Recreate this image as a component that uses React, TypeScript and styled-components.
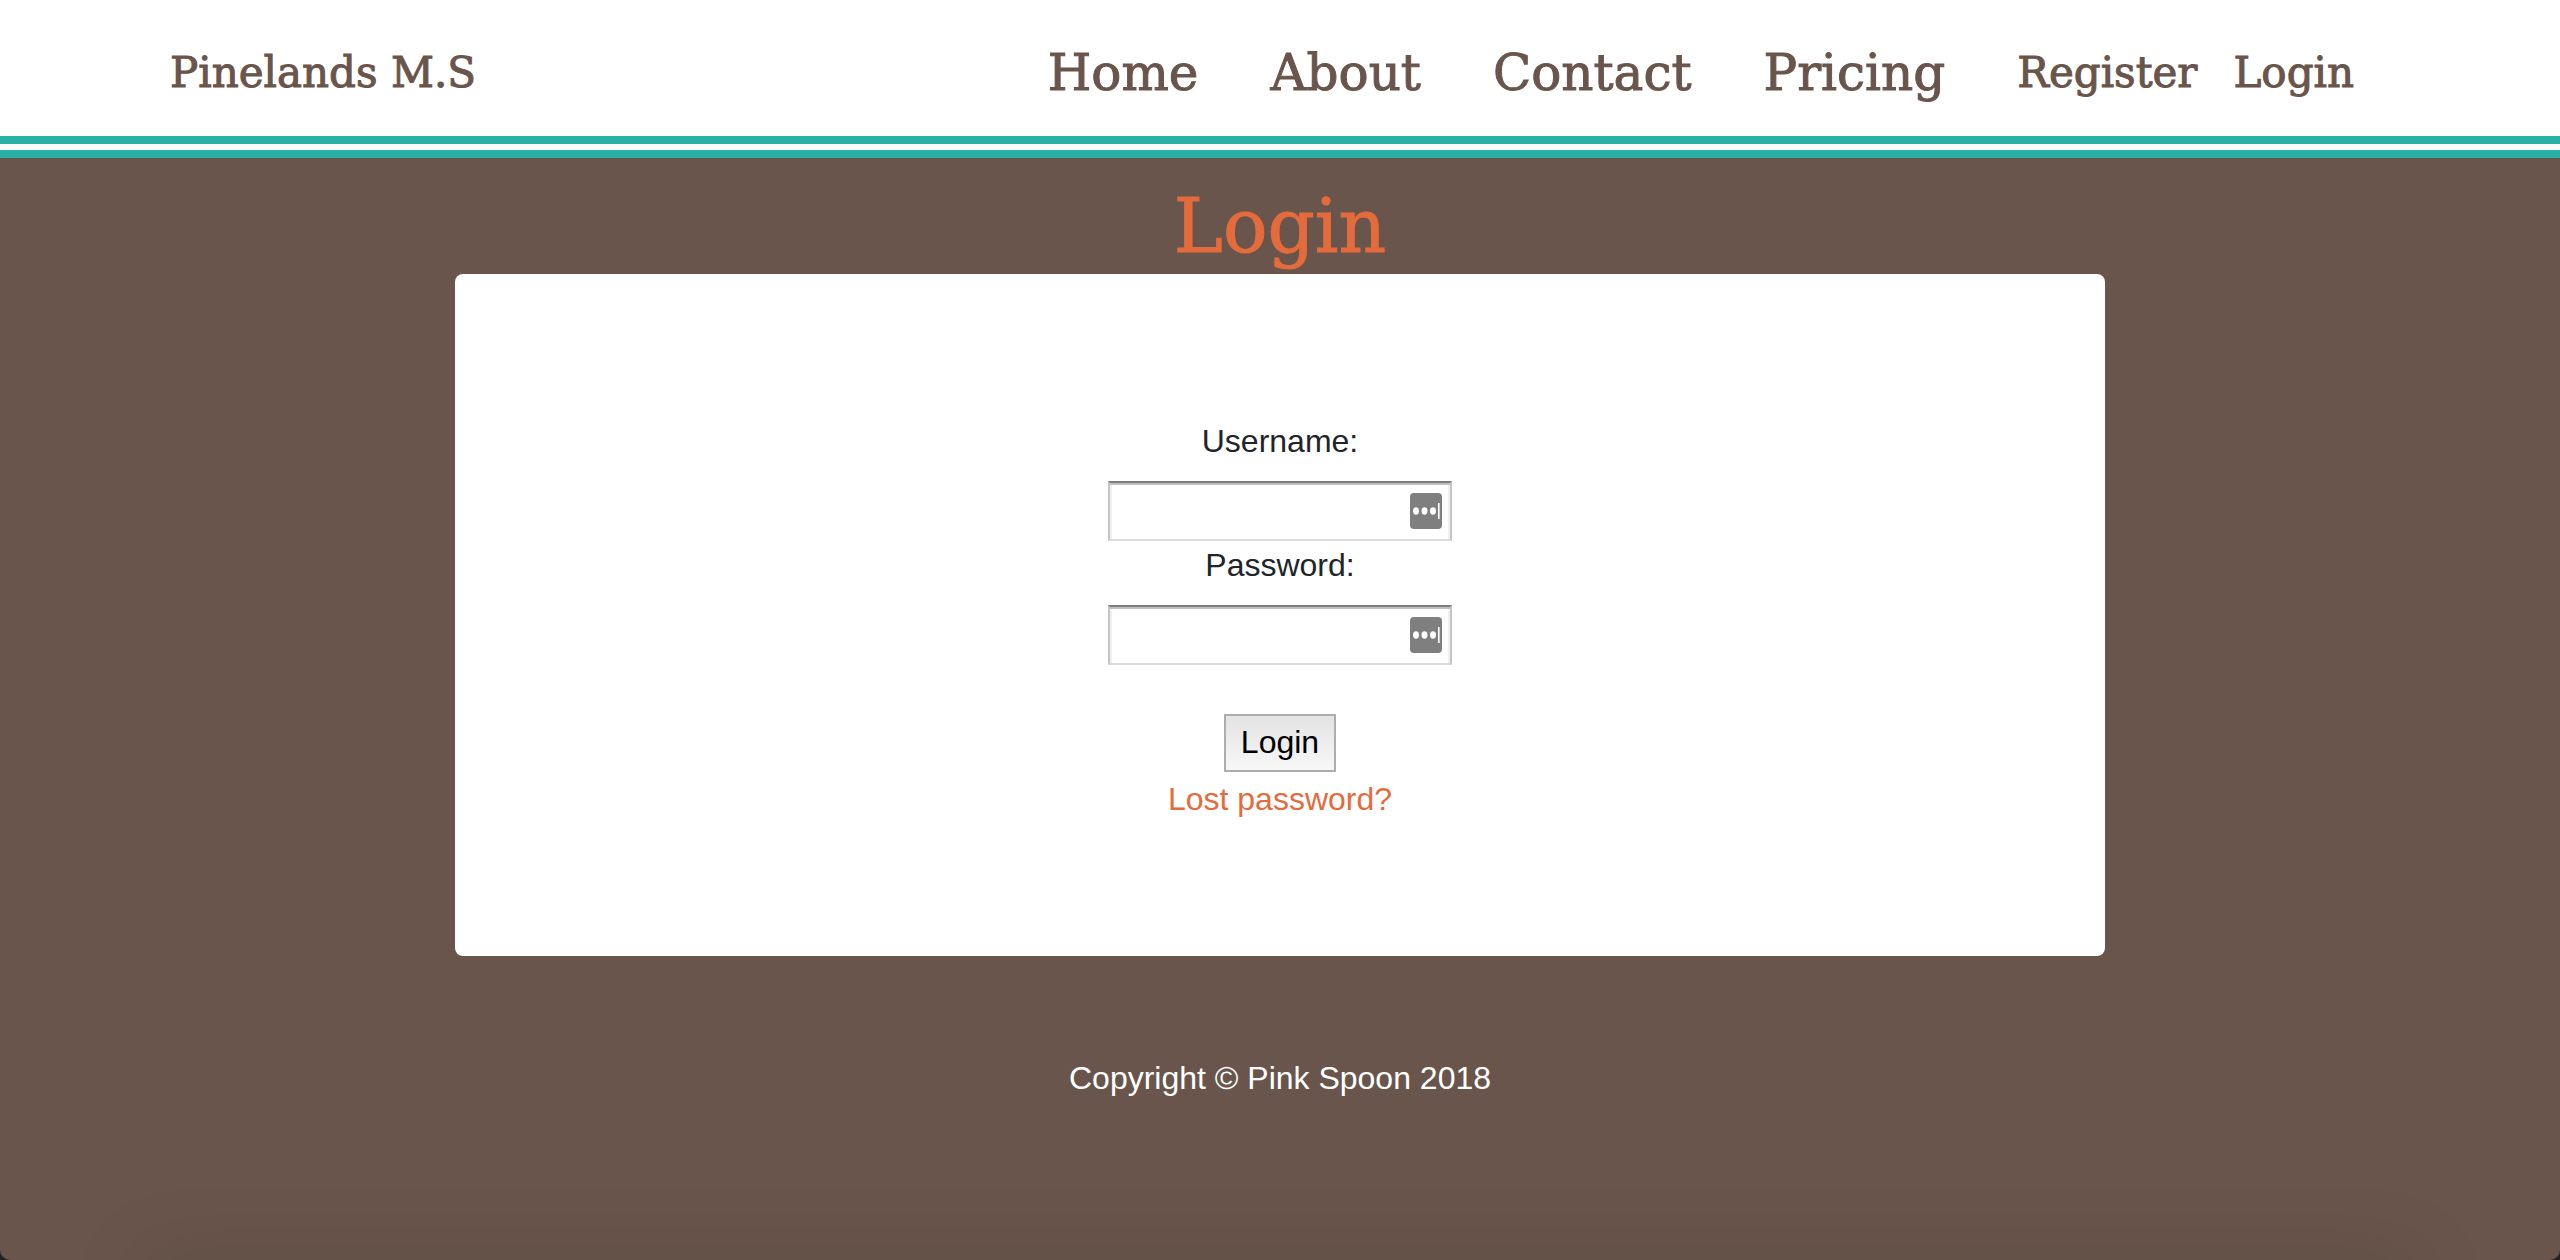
import React from "react";
import styled, { createGlobalStyle } from "styled-components";

const brown = "#69554b";
const teal = "#29b1a5";
const orange = "#e46b3c";
const slab = `"DejaVu Serif", serif`;
const sans = `"Liberation Sans", Arial, sans-serif`;

const GlobalStyle = createGlobalStyle`
  *, *::before, *::after { box-sizing: border-box; }
  html { background: #222; }
  body {
    margin: 0;
    font-family: ${sans};
    font-size: 32px;
    line-height: 48px;
    color: #212529;
  }
`;

const Page = styled.div`
  position: relative;
  min-height: 100vh;
  overflow: hidden;
  background: ${brown};
  border-radius: 0 0 10px 10px;

  &::after {
    content: "";
    position: absolute;
    left: 140px;
    right: 140px;
    bottom: -40px;
    height: 40px;
    box-shadow: 0 0 80px rgba(0, 0, 0, 0.14);
  }
`;

const Header = styled.header`
  background: #fff;
`;

const Stripes = styled.div`
  height: 22px;
  border: solid ${teal};
  border-width: 8px 0;
`;

const Bar = styled.div`
  max-width: 2220px;
  min-height: 136px;
  margin: 0 auto;
  padding: 10px 36px 0 0;
  display: flex;
  align-items: center;
  justify-content: space-between;
`;

const NavLink = styled.a<{ $large?: boolean }>`
  font-family: ${slab};
  font-size: ${(p) => (p.$large ? 50 : 42)}px;
  line-height: 64px;
  color: ${brown};
  -webkit-text-stroke: 1px ${brown};
  text-decoration: none;
  white-space: nowrap;
`;

const Nav = styled.nav`
  display: flex;
  align-items: center;
  gap: 72px;
`;

const Account = styled.div`
  display: flex;
  gap: 36px;
`;

const Main = styled.main`
  display: flex;
  flex-direction: column;
  align-items: center;
`;

const Title = styled.h1`
  margin: 0;
  padding-top: 20px;
  font-family: ${slab};
  font-weight: 400;
  font-size: 74px;
  line-height: 96px;
  color: ${orange};
  -webkit-text-stroke: 1px ${orange};
`;

const Card = styled.section`
  width: 100%;
  max-width: 1650px;
  padding: 143px 32px 133px;
  background: #fff;
  border-radius: 8px;
`;

const Form = styled.form`
  display: flex;
  flex-direction: column;
  align-items: center;
`;

const Label = styled.label`
  margin-bottom: 16px;
`;

const Field = styled.div`
  position: relative;
  width: 344px;
`;

const Input = styled.input`
  display: block;
  width: 100%;
  height: 60px;
  padding: 2px 48px 2px 8px;
  border: 2px solid #c4c4c4;
  border-top-color: #7c7c7c;
  border-bottom-color: #dadada;
  border-radius: 0;
  outline: none;
  background: #fff;
  box-shadow: inset 0 2px #c0c0c0, inset 2px 0 #f0f0f0, inset -2px 0 #f0f0f0;
  font: inherit;
`;

const FillBadge = styled.svg`
  position: absolute;
  top: 12px;
  right: 10px;
  width: 32px;
  height: 36px;
`;

const Submit = styled.button`
  height: 58px;
  margin: 49px 0 3px;
  padding: 0 15px 3px;
  border: 2px solid #adadad;
  border-radius: 0;
  background: linear-gradient(#e3e3e3, #f7f7f7);
  font: inherit;
  line-height: 48px;
  color: #000;
`;

const Lost = styled.a`
  color: ${orange};
  text-decoration: none;
`;

const Footer = styled.footer`
  padding: 98px 0 32px;
  text-align: center;
  color: #fff;
`;

function PasswordManagerBadge() {
  return (
    <FillBadge viewBox="0 0 32 36" aria-hidden="true">
      <rect width="32" height="36" rx="4" fill="#7f7f7f" />
      <g fill="#fff">
        <ellipse cx="6" cy="18" rx="3" ry="3.7" />
        <ellipse cx="14.5" cy="18" rx="3" ry="3.7" />
        <ellipse cx="23" cy="18" rx="3" ry="3.7" />
        <rect x="28" y="10" width="1.6" height="16" />
      </g>
    </FillBadge>
  );
}

export default function App() {
  return (
    <>
      <GlobalStyle />
      <Page>
        <Header>
          <Bar>
            <NavLink href="#">Pinelands M.S</NavLink>
            <Nav>
              {["Home", "About", "Contact", "Pricing"].map((name) => (
                <NavLink key={name} href="#" $large>
                  {name}
                </NavLink>
              ))}
              <Account>
                <NavLink href="#">Register</NavLink>
                <NavLink href="#">Login</NavLink>
              </Account>
            </Nav>
          </Bar>
          <Stripes />
        </Header>
        <Main>
          <Title>Login</Title>
          <Card>
            <Form onSubmit={(e) => e.preventDefault()}>
              <Label htmlFor="username">Username:</Label>
              <Field>
                <Input id="username" type="text" />
                <PasswordManagerBadge />
              </Field>
              <Label htmlFor="password">Password:</Label>
              <Field>
                <Input id="password" type="password" />
                <PasswordManagerBadge />
              </Field>
              <Submit type="submit">Login</Submit>
              <Lost href="#">Lost password?</Lost>
            </Form>
          </Card>
        </Main>
        <Footer>Copyright © Pink Spoon 2018</Footer>
      </Page>
    </>
  );
}
